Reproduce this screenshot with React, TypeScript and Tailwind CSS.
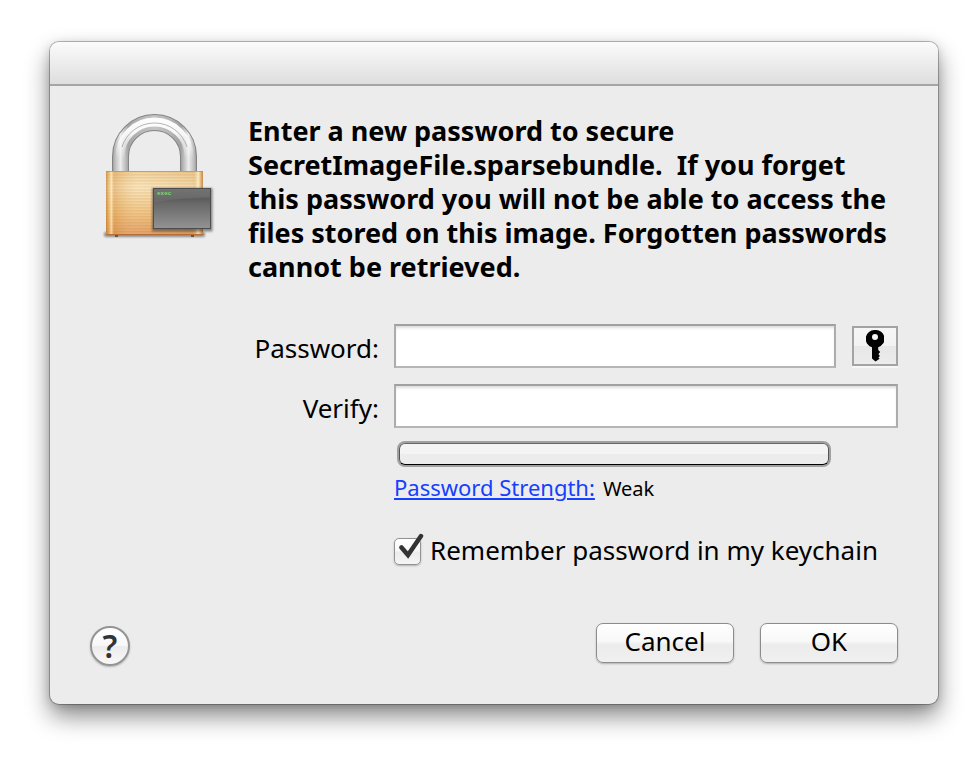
import { useState } from "react";

const body = "text-[26px] leading-[34px]";
const field =
  "h-[44px] w-full min-w-0 border-2 border-t-[#a0a0a0] border-x-[#acacac] border-b-[#b6b6b6] bg-white px-2 text-[26px] shadow-[inset_0_3px_3px_-1px_#dcdcdc] outline-none";
const pushButton =
  "h-[40px] w-[138px] rounded-[7px] border border-[#8c8c8c] bg-[linear-gradient(#ffffff_0%,#f8f8f8_45%,#ececec_55%,#f0f0f0_100%)] pb-1 shadow-[0_1px_2px_#00000040] text-[26px] leading-[34px]";

function LockIcon() {
  return (
    <svg className="h-[140px] w-[136px] shrink-0" viewBox="0 0 136 140" aria-label="Encrypted disk image" role="img">
      <defs>
        <linearGradient id="body" x1="0" y1="0" x2="0" y2="1">
          <stop offset="0" stopColor="#eccb91" />
          <stop offset="0.25" stopColor="#f7e4ba" />
          <stop offset="0.65" stopColor="#edbd78" />
          <stop offset="1" stopColor="#dc9050" />
        </linearGradient>
        <linearGradient id="edge" x1="0" y1="0" x2="1" y2="0">
          <stop offset="0" stopColor="#b86d20" stopOpacity="0.6" />
          <stop offset="0.03" stopColor="#e7ae59" stopOpacity="0.5" />
          <stop offset="0.055" stopColor="#fff0c8" stopOpacity="0.7" />
          <stop offset="0.085" stopColor="#d89446" stopOpacity="0.4" />
          <stop offset="0.35" stopColor="#fff0c8" stopOpacity="0.12" />
          <stop offset="0.89" stopColor="#d69a4d" stopOpacity="0.15" />
          <stop offset="0.95" stopColor="#fff3cf" stopOpacity="0.8" />
          <stop offset="1" stopColor="#c27526" stopOpacity="0.8" />
        </linearGradient>
        <pattern id="brushed" width="4" height="3" patternUnits="userSpaceOnUse">
          <path d="M0 1h4" stroke="#bd7634" strokeOpacity="0.24" />
          <path d="M0 2h4" stroke="#ffffff" strokeOpacity="0.16" />
        </pattern>
        <linearGradient id="steel" gradientUnits="userSpaceOnUse" x1="22" y1="0" x2="107" y2="0">
          <stop offset="0" stopColor="#909090" />
          <stop offset="0.03" stopColor="#b8b8b8" />
          <stop offset="0.1" stopColor="#ececec" />
          <stop offset="0.19" stopColor="#a4a4a4" />
          <stop offset="0.3" stopColor="#b4b4b4" />
          <stop offset="0.5" stopColor="#c4c4c4" />
          <stop offset="0.7" stopColor="#b4b4b4" />
          <stop offset="0.81" stopColor="#a0a0a0" />
          <stop offset="0.9" stopColor="#ececec" />
          <stop offset="0.97" stopColor="#b8b8b8" />
          <stop offset="1" stopColor="#909090" />
        </linearGradient>
        <linearGradient id="shine" gradientUnits="userSpaceOnUse" x1="0" y1="8" x2="0" y2="54">
          <stop offset="0" stopColor="#ffffff" />
          <stop offset="0.45" stopColor="#ffffff" stopOpacity="0.9" />
          <stop offset="1" stopColor="#ffffff" stopOpacity="0" />
        </linearGradient>
        <linearGradient id="plate" x1="0" y1="0" x2="0" y2="1">
          <stop offset="0" stopColor="#696969" />
          <stop offset="0.28" stopColor="#5d5d5d" />
          <stop offset="0.34" stopColor="#666666" />
          <stop offset="1" stopColor="#939393" />
        </linearGradient>
        <filter id="soft" x="-10%" y="-100%" width="120%" height="300%">
          <feGaussianBlur stdDeviation="1.2" />
        </filter>
      </defs>
      <rect x="14" y="127" width="101" height="5" rx="2" fill="#555555" opacity="0.65" filter="url(#soft)" />
      <path d="M30.500 68V51.500A34 34 0 0 1 98.500 51.500V68" fill="none" stroke="#848484" strokeWidth="17" />
      <path d="M30.500 68V51.500A34 34 0 0 1 98.500 51.500V68" fill="none" stroke="url(#steel)" strokeWidth="15" />
      <path d="M30 56V51.500A34.500 34.500 0 0 1 99 51.500V56" fill="none" stroke="url(#shine)" strokeWidth="9" />
      <path d="M32 42A34 34 0 0 1 97 42" fill="none" stroke="#9c9c9c" strokeWidth="1" opacity="0.75" />
      <rect x="25" y="129" width="3" height="3" fill="#76512e" />
      <rect x="101" y="129" width="3" height="3" fill="#76512e" />
      <rect x="16" y="66" width="97" height="63.500" rx="1" fill="url(#body)" />
      <rect x="16" y="66" width="97" height="63.500" rx="1" fill="url(#brushed)" />
      <rect x="16" y="66" width="97" height="63.500" rx="1" fill="url(#edge)" />
      <path d="M16 66.500h97" stroke="#b78348" strokeOpacity="0.6" />
      <path d="M17 129.500h96" stroke="#b66d36" />
      <rect x="62" y="83" width="60.500" height="43.500" fill="#333333" opacity="0.55" filter="url(#soft)" />
      <rect x="63.500" y="83.500" width="57" height="40" fill="url(#plate)" stroke="#4d4d4d" />
      <path d="M64 84h56v8q-28 1-56 5z" fill="#ffffff" opacity="0.07" />
      <text x="67" y="90" fill="#72dc68" fontSize="6" fontWeight="700" fontFamily="Liberation Mono, monospace">exec</text>
    </svg>
  );
}

export default function App() {
  const [remember, setRemember] = useState(true);
  return (
    <main className="min-h-screen bg-white pt-[42px] pr-[42px] pb-[62px] pl-[50px] font-['Noto_Sans',sans-serif] text-black">
      <section
        role="dialog"
        aria-label="Disk image password"
        className="overflow-hidden rounded-[9px] bg-[#ececec] shadow-[0_0_0_1px_#00000040,0_12px_24px_#00000078,0_2px_10px_#00000028]"
      >
        <header className="h-[44px] border-b-2 border-[#a5a5a5] bg-linear-to-b from-[#fbfbfb] to-[#dedede]" />
        <form className="px-[40px] pt-[19px] pb-[38px]" onSubmit={(e) => e.preventDefault()}>
          <div className="flex items-start gap-[22px]">
            <LockIcon />
            <p className="pt-[9px] text-[27px] leading-[34px] font-bold whitespace-nowrap">
              Enter a new password to secure
              <br />
              SecretImageFile.sparsebundle.&nbsp; If you forget
              <br />
              this password you will not be able to access the
              <br />
              files stored on this image. Forgotten passwords
              <br />
              cannot be retrieved.
            </p>
          </div>

          <div className="mt-10 grid grid-cols-[289px_1fr] items-center gap-x-[15px] gap-y-4">
            <label htmlFor="password" className={`${body} pt-1 text-right`}>
              Password:
            </label>
            <div className="flex items-center gap-4">
              <input id="password" type="password" className={field} />
              <button
                type="button"
                aria-label="Password assistant"
                className="flex h-[40px] w-[46px] shrink-0 items-center justify-center border-2 border-[#a3a3a3] bg-[linear-gradient(#f6f6f6_0%,#f2f2f2_49%,#e7e7e7_51%,#ececec_100%)] shadow-[0_2px_0_#f6f6f6]"
              >
                <svg className="h-[32px] w-[18px]" viewBox="0 0 18 32">
                  <path
                    fillRule="evenodd"
                    d="M9 0a9 8.800 0 0 1 3.200 17.200V20l2 2-1.800 2 1.500 2-1.500 1.500 1.200 1.200L9.500 31.500 6 28.500V17.200A9 8.800 0 0 1 9 0ZM9 4a3 3 0 1 0 0 6 3 3 0 0 0 0-6Z"
                  />
                </svg>
              </button>
            </div>
            <label htmlFor="verify" className={`${body} pt-1 text-right`}>
              Verify:
            </label>
            <input id="verify" type="password" className={field} />
          </div>

          <div className="mt-[13px] pl-[304px]">
            <div
              role="meter"
              aria-label="Password strength"
              aria-valuenow={0}
              aria-valuemin={0}
              aria-valuemax={100}
              className="mr-[67px] ml-[3px] h-[26px] rounded-[8px] border-2 border-[#a0a0a0]"
            >
              <div className="h-full rounded-[6px] border border-t-[#666666] border-x-[#555555] border-b-black bg-[linear-gradient(#f4f4f4_50%,#ececec_50%)]" />
            </div>
            <p className="mt-1 flex items-baseline gap-2 leading-[32px]">
              <a href="#strength" className="text-[22px] text-[#1440ff] underline decoration-2 underline-offset-2">
                Password Strength:
              </a>
              <span className="text-[20px]">Weak</span>
            </p>
            <label className={`${body} mt-7 flex items-start gap-2 whitespace-nowrap`}>
              <span className="relative mt-[5px] h-[28px] w-[28px] shrink-0">
                <input
                  type="checkbox"
                  checked={remember}
                  onChange={(e) => setRemember(e.target.checked)}
                  className="block h-[27px] w-[27px] appearance-none rounded-[5px] border border-[#929292] bg-[linear-gradient(#ffffff_0%,#f8f8f8_45%,#ececec_55%,#f5f5f5_100%)] shadow-[0_1px_2px_#00000040]"
                />
                {remember && (
                  <svg className="pointer-events-none absolute -top-[5px] left-[4px] h-[28px] w-[27px]" viewBox="0 0 27 28">
                    <path d="M3.500 14.500 10 22 23 3" fill="none" stroke="#333333" strokeWidth="4.500" strokeLinecap="round" />
                  </svg>
                )}
              </span>
              Remember password in my keychain
            </label>
          </div>

          <div className="mt-14 flex items-start">
            <button
              type="button"
              aria-label="Help"
              className="mt-[3px] flex h-[40px] w-[40px] items-center justify-center rounded-full border-2 border-[#949494] bg-[linear-gradient(#ffffff_0%,#f8f8f8_48%,#ececec_52%,#f8f8f8_100%)] text-[32px] leading-[36px] font-semibold text-[#333333] shadow-[0_1px_2px_#00000040]"
            >
              ?
            </button>
            <div className="ml-auto flex gap-[26px]">
              <button type="button" className={pushButton}>
                Cancel
              </button>
              <button type="submit" className={pushButton}>
                OK
              </button>
            </div>
          </div>
        </form>
      </section>
    </main>
  );
}
